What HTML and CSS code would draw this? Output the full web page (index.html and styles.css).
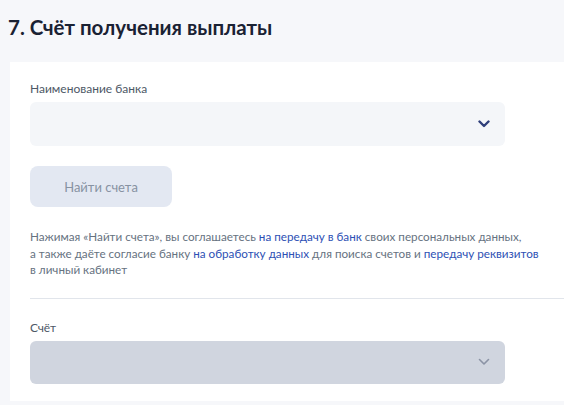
FILE: index.html
```html
<!DOCTYPE html>
<html lang="ru">
<head>
    <meta charset="UTF-8">
    <meta name="viewport" content="width=device-width, initial-scale=1.0">
    <title>Счёт получения выплаты</title>
    <link rel="stylesheet" href="styles.css">
</head>
<body>
    <h2 class="section-title">7. Счёт получения выплаты</h2>

    <div class="section-card">
        <div class="form-group">
            <label>Наименование банка</label>
            <div class="select">
                <svg class="chevron" width="12" height="8" viewBox="0 0 12 8">
                    <path d="M1.5 1.5 L6 6 L10.5 1.5" fill="none" stroke="#2f3f7a" stroke-width="2.4" stroke-linecap="round" stroke-linejoin="round"/>
                </svg>
            </div>
        </div>

        <button type="button" class="find-button" disabled>Найти счета</button>

        <p class="consent">
            Нажимая «Найти счета», вы соглашаетесь <a href="#">на передачу в банк</a> своих персональных данных,<br>
            а также даёте согласие банку <a href="#">на обработку данных</a> для поиска счетов и <a href="#">передачу реквизитов</a><br>
            в личный кабинет
        </p>

        <hr class="divider">

        <div class="form-group">
            <label>Счёт</label>
            <div class="select disabled">
                <svg class="chevron" width="12" height="8" viewBox="0 0 12 8">
                    <path d="M1.5 1.5 L6 6 L10.5 1.5" fill="none" stroke="#8b93a5" stroke-width="1.6" stroke-linecap="round" stroke-linejoin="round"/>
                </svg>
            </div>
        </div>
    </div>
</body>
</html>
```

FILE: styles.css
```css
* {
    margin: 0;
    padding: 0;
    box-sizing: border-box;
    font-family: Lato, 'Liberation Sans', sans-serif;
}

body {
    background-color: #f6f7fa;
    color: #0b1f33;
    overflow: hidden;
}

.section-title {
    padding: 14px 8px 0;
    height: 62px;
    font-size: 20.5px;
    line-height: 26px;
    font-weight: 700;
    color: #1a2233;
}

.section-card {
    margin-left: 10px;
    padding: 18px 20px 17px;
    background-color: #fff;
    display: flex;
    flex-direction: column;
}

.form-group {
    display: flex;
    flex-direction: column;
    gap: 5px;
}

.form-group label {
    font-size: 12px;
    line-height: 17px;
    color: #4d5866;
}

.select {
    width: 475px;
    height: 44px;
    border-radius: 6px;
    background-color: #f4f6f9;
    display: flex;
    align-items: center;
    justify-content: flex-end;
    padding-right: 15px;
}

.select.disabled {
    height: 43px;
    background-color: #d0d5df;
}

.find-button {
    margin-top: 20px;
    width: 142px;
    height: 41px;
    border: none;
    border-radius: 8px;
    background-color: #e3e8f2;
    color: #8792a2;
    font-size: 13px;
}

.consent {
    margin-top: 21px;
    font-size: 11.7px;
    line-height: 16.5px;
    color: #66727f;
}

.consent a {
    color: #2d50b4;
    text-decoration: none;
}

.divider {
    margin: 20px -20px 20px 0;
    border: none;
    border-top: 1px solid #e1e5eb;
}
```
